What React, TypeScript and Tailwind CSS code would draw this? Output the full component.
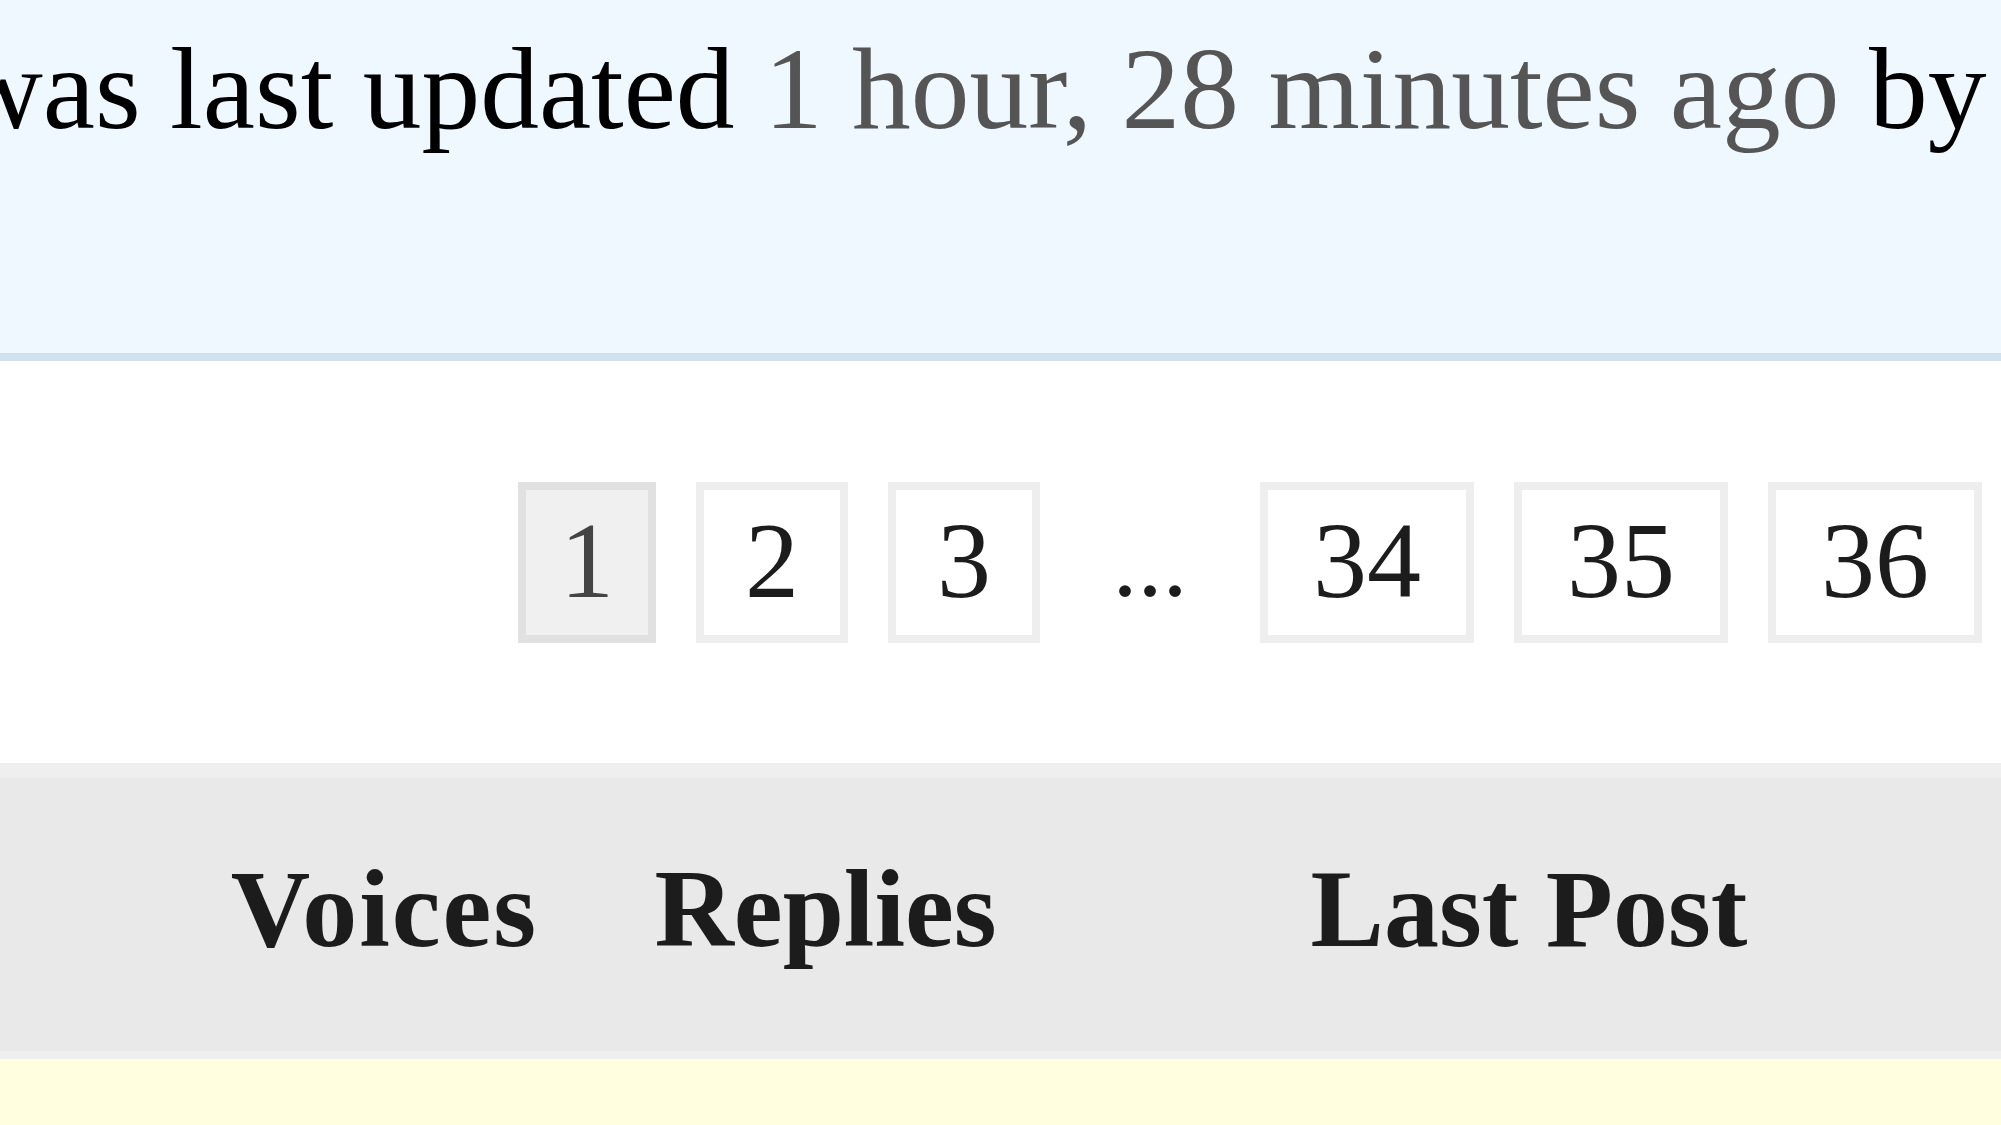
const serif = { fontFamily: '"Liberation Serif", "DejaVu Serif", serif' };

const pages = [
  { label: "1", current: true },
  { label: "2" },
  { label: "3" },
  { label: "…", dots: true },
  { label: "34" },
  { label: "35" },
  { label: "36" },
];

export default function App() {
  return (
    <div className="w-[2001px] h-[1125px] overflow-hidden bg-white text-black" style={serif}>
      {/* Topic freshness notice */}
      <div className="h-[361px] bg-[#eff7ff] border-b-[8px] border-[#d0e0ec] pt-[30px]">
        <p className="ml-[-42px] whitespace-nowrap text-[117.5px] leading-[117.5px] text-black">
          was last updated <span className="text-[#555555]">1 hour, 28 minutes ago</span> by
        </p>
      </div>

      {/* Pagination */}
      <div className="h-[402px] flex justify-end items-start pt-[121px] pr-[19px]">
        <div className="flex items-center gap-[40px]">
          {pages.map((p) =>
            p.dots ? (
              <span key={p.label} className="w-[140px] text-center text-[100px] leading-[161px] text-[#1c1c1c]">
                ...
              </span>
            ) : (
              <a
                key={p.label}
                href="#"
                className={
                  p.current
                    ? "h-[161px] flex items-center pb-[4px] px-[34px] border-[8px] border-[#e1e1e1] bg-[#f0f0f0] text-[#444444] text-[108px] leading-none"
                    : p.label.length > 1
                    ? "h-[161px] flex items-center pb-[4px] px-[45px] border-[8px] border-[#eeeeee] bg-white text-[#1c1c1c] text-[108px] leading-none"
                    : "h-[161px] flex items-center pb-[4px] px-[41px] border-[8px] border-[#eeeeee] bg-white text-[#1c1c1c] text-[108px] leading-none"
                }
              >
                {p.label}
              </a>
            )
          )}
        </div>
      </div>

      {/* Forum table header */}
      <div className="border-t-[15px] border-b-[8px] border-[#efefef] bg-[#e9e9e9] h-[296px] pb-[12px] flex items-center text-[#1c1c1c] font-bold text-[110px] leading-none">
        <div className="w-[164px]" />
        <div className="w-[441px] text-center tracking-[2px]">Voices</div>
        <div className="w-[441px] text-center">Replies</div>
        <div className="flex-1 text-center pl-[11px]">Last Post</div>
      </div>

      {/* First row */}
      <div className="h-[66px] bg-[#ffffe0]" />
    </div>
  );
}
